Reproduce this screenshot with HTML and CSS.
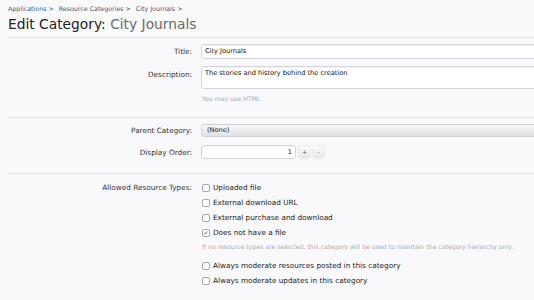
FILE: index.html
```html
<!DOCTYPE html>
<html lang="en">
<head>
    <meta charset="UTF-8">
    <title>Edit Category: City Journals</title>
    <link rel="stylesheet" href="styles.css">
</head>
<body>
    <div class="page">
        <nav class="crumbs">
            <a href="#">Applications &gt;</a>
            <a href="#">Resource Categories &gt;</a>
            <a href="#">City Journals &gt;</a>
        </nav>
        <h1 class="title">Edit Category: <span class="title-sub">City Journals</span></h1>

        <form class="form">
            <div class="group group-first">
                <div class="row row-title">
                    <label class="label">Title:</label>
                    <div class="ctrl"><div class="input text-input">City Journals</div></div>
                </div>
                <div class="row row-top">
                    <label class="label">Description:</label>
                    <div class="ctrl">
                        <div class="input textarea">The stories and history behind the creation</div>
                        <p class="hint hint-html">You may use HTML</p>
                    </div>
                </div>
            </div>

            <div class="group group-mid">
                <div class="row">
                    <label class="label">Parent Category:</label>
                    <div class="ctrl"><div class="select">(None)</div></div>
                </div>
                <div class="row row-order">
                    <label class="label">Display Order:</label>
                    <div class="ctrl spin">
                        <div class="input order">1</div>
                        <span class="spin-btn">+</span>
                        <span class="spin-btn">-</span>
                    </div>
                </div>
            </div>

            <div class="group group-last">
                <div class="row row-top">
                    <label class="label label-check">Allowed Resource Types:</label>
                    <div class="ctrl">
                        <ul class="checks">
                            <li><span class="box"></span>Uploaded file</li>
                            <li><span class="box"></span>External download URL</li>
                            <li><span class="box"></span>External purchase and download</li>
                            <li><span class="box checked">&#x2713;</span>Does not have a file</li>
                        </ul>
                        <p class="hint hint-types">If no resource types are selected, this category will be used to maintain the category hierarchy only.</p>
                        <ul class="checks">
                            <li><span class="box"></span>Always moderate resources posted in this category</li>
                            <li><span class="box"></span>Always moderate updates in this category</li>
                        </ul>
                    </div>
                </div>
            </div>
        </form>
    </div>
</body>
</html>
```

FILE: styles.css
```css
body {
    margin: 0;
    background-color: #f9f9fc;
    font-family: "DejaVu Sans", Verdana, sans-serif;
    color: #222;
    overflow: hidden;
}

.page {
    padding-left: 8px;
}

.crumbs {
    display: flex;
    gap: 5px;
    padding-top: 3px;
    height: 11px;
    font-size: 6.3px;
    line-height: 11px;
}

.crumbs a {
    color: #3b5a76;
    text-decoration: none;
}

.title {
    margin: 0;
    height: 23px;
    font-size: 13.8px;
    font-weight: normal;
    line-height: 21px;
    color: #222;
    border-bottom: 1px solid #e3e5ec;
}

.title-sub {
    color: #6b6b6b;
}

.form {
    margin: 0;
}

.group {
    padding: 5px 0 0;
    border-bottom: 1px solid #e3e5ec;
}

.group-first {
    padding-top: 6px;
}

.group-mid {
    padding-top: 6px;
    height: 49px;
}

.group-last {
    border-bottom: none;
    padding-top: 6px;
}

.row {
    display: flex;
    align-items: center;
    gap: 9px;
    margin-bottom: 8px;
}

.row-title {
    margin-bottom: 7px;
}

.row-order {
    margin-top: 2px;
}

.row-top {
    align-items: flex-start;
}

.label {
    width: 184px;
    flex-shrink: 0;
    text-align: right;
    font-size: 7.3px;
    color: #333;
}

.row-top .label {
    padding-top: 4px;
}

.row-top .label-check {
    padding-top: 0;
    line-height: 15px;
}

.ctrl {
    flex: 1;
    min-width: 0;
}

.input {
    box-sizing: border-box;
    background: #fff;
    border: 1px solid #d4d5da;
    border-radius: 3px;
    box-shadow: inset 0 1px 1px rgba(0, 0, 0, 0.05);
    font-size: 6.6px;
    color: #111;
}

.text-input {
    width: 360px;
    height: 15px;
    padding: 0 3px;
    line-height: 13px;
}

.textarea {
    width: 360px;
    height: 23px;
    padding: 2px 3px;
    line-height: 9px;
}

.hint {
    margin: 0;
    font-size: 6.2px;
    line-height: 8px;
    color: #a9abb2;
}

.hint-html {
    padding: 6px 0 6px 1px;
}

.select {
    box-sizing: border-box;
    width: 360px;
    height: 13px;
    padding: 0 5px;
    line-height: 11px;
    font-size: 6.6px;
    border: 1px solid #cfd0d4;
    border-radius: 3px 0 0 3px;
    background: linear-gradient(#f6f6f6, #e2e2e4);
    color: #222;
}

.spin {
    display: flex;
    align-items: center;
    gap: 3px;
}

.order {
    width: 95px;
    height: 14px;
    padding: 0 3px;
    text-align: right;
    line-height: 12px;
}

.spin-btn {
    box-sizing: border-box;
    width: 11px;
    height: 12px;
    border-radius: 3px;
    background: linear-gradient(#fbfbfc, #e6e7ea);
    box-shadow: 0 0 2px rgba(0, 0, 0, 0.25);
    font-size: 6px;
    line-height: 12px;
    text-align: center;
    color: #555;
}

.checks {
    list-style: none;
    margin: 0;
    padding: 0;
}

.checks li {
    display: flex;
    align-items: center;
    gap: 3px;
    height: 15px;
    font-size: 7.3px;
    color: #222;
}

.box {
    box-sizing: border-box;
    width: 8px;
    height: 8px;
    margin-left: 1px;
    border: 1px solid #a6a8ae;
    border-radius: 2px;
    background: #fff;
    font-size: 6px;
    line-height: 6px;
    text-align: center;
    color: #333;
}

.hint-types {
    padding: 3px 0 7px 1px;
}
```
